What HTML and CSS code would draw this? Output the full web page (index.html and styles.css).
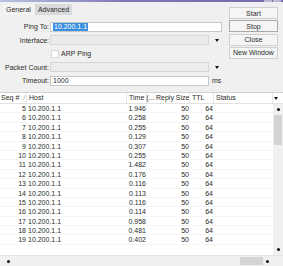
FILE: index.html
```html
<!DOCTYPE html>
<html lang="en">
<head>
  <meta charset="UTF-8">
  <title>Ping</title>
  <link rel="stylesheet" href="styles.css">
</head>
<body>
  <div class="titlebar"><span class="winbtn"></span><span class="winbtn"></span></div>

  <!-- settings area -->
  <div class="top">
    <div class="main">
      <div class="tabs">
        <span class="tab active">General</span>
        <span class="tab">Advanced</span>
      </div>
      <div class="form">
        <div class="row">
          <label>Ping To:</label>
          <div class="field white wide"><span class="sel">10.200.1.1</span></div>
        </div>
        <div class="row">
          <label>Interface:</label>
          <div class="field gray"></div>
          <span class="arrow"></span>
        </div>
        <div class="row">
          <label></label>
          <span class="check"></span><span class="checktext">ARP Ping</span>
        </div>
        <div class="row">
          <label>Packet Count:</label>
          <div class="field gray"></div>
          <span class="arrow"></span>
        </div>
        <div class="row">
          <label>Timeout:</label>
          <div class="field white">1000</div>
          <span class="unit">ms</span>
        </div>
      </div>
    </div>
    <div class="buttons">
      <button>Start</button>
      <button class="focus">Stop</button>
      <button>Close</button>
      <button>New Window</button>
    </div>
  </div>

  <!-- results table -->
  <div class="table">
    <div class="thead">
      <div class="th seq">Seq # <span class="sort">/</span></div>
      <div class="th">Host</div>
      <div class="th time">Time (...</div>
      <div class="th pad">Reply Size</div>
      <div class="th">TTL</div>
      <div class="th">Status</div>
      <div class="th menu"><span class="arrow"></span></div>
    </div>
    <div class="body">
      <div class="rows" id="rows"></div>
      <div class="vscroll">
        <span class="dot"></span>
        <span class="vthumb"></span>
        <span class="dot bottom"></span>
      </div>
    </div>
    <div class="hscroll">
      <div class="htrack">
        <span class="dot"></span>
        <span class="hthumb"></span>
        <span class="dot"></span>
      </div>
      <div class="corner"></div>
    </div>
  </div>

  <script>
    var times = ["1.946", "0.258", "0.255", "0.129", "0.307", "0.255", "1.482", "0.176",
                 "0.116", "0.113", "0.116", "0.114", "0.958", "0.481", "0.402"];
    var rows = document.getElementById("rows");
    times.forEach(function (t, i) {
      var row = document.createElement("div");
      row.className = "tr";
      row.innerHTML = '<div class="td num">' + (i + 5) + '</div>' +
        '<div class="td">10.200.1.1</div>' +
        '<div class="td num">' + t + '</div>' +
        '<div class="td num">50</div>' +
        '<div class="td num">64</div>' +
        '<div class="td"></div>';
      rows.appendChild(row);
    });
  </script>
</body>
</html>
```

FILE: styles.css
```css
html {
  box-sizing: border-box;
}
*, *:before, *:after {
  box-sizing: inherit;
}
body {
  margin: 0;
  width: 283px;
  height: 266px;
  overflow: hidden;
  background-color: #f0f0f0;
  font-family: "Liberation Sans", Arial, sans-serif;
  font-size: 7px;
  color: #2b2b2b;
}
.titlebar {
  height: 2px;
  background: linear-gradient(to right, #b9c2df, #7d77b6 45%, #6f6bab);
  display: flex;
  justify-content: flex-end;
  gap: 1px;
  padding-right: 2px;
}
.winbtn {
  width: 8px;
  height: 2px;
  background-color: #b9b8d6;
}

/* top part */
.top {
  display: flex;
  height: 90px;
}
.main {
  flex: 1;
}
.tabs {
  display: flex;
  padding: 2px 0 0 3px;
  height: 16px;
}
.tab {
  height: 11px;
  line-height: 11px;
  padding: 0 3px;
}
.tab.active {
  background-color: #f4f4f4;
}
.tab:not(.active) {
  background-color: #dadada;
  margin-left: 1px;
}
.form {
  padding-top: 2px;
}
.row {
  display: flex;
  align-items: center;
  height: 13.5px;
}
.row label {
  width: 50px;
  text-align: right;
  padding-right: 1px;
}
.field {
  width: 159px;
  height: 10px;
  line-height: 8px;
  border: 1px solid #c8c8c8;
  padding-left: 2px;
}
.field.wide {
  width: 172px;
}
.field.white {
  background-color: #fff;
}
.field.gray {
  background-color: #ececec;
  border-color: #d6d6d6;
}
.sel {
  background-color: #3b8fe0;
  color: #fff;
  display: inline-block;
  padding: 0 1px;
}
.arrow {
  width: 0;
  height: 0;
  border-left: 2.5px solid transparent;
  border-right: 2.5px solid transparent;
  border-top: 3px solid #111;
  margin-left: 6px;
}
.check {
  width: 8px;
  height: 8px;
  background-color: #fff;
  border: 1px solid #d8d8d8;
  margin-left: 1px;
}
.checktext {
  margin-left: 2px;
}
.unit {
  margin-left: 3px;
}
.buttons {
  width: 54px;
  padding: 5px 5px 0 0;
  display: flex;
  flex-direction: column;
  gap: 1.3px;
}
button {
  height: 12px;
  padding: 0;
  font-family: inherit;
  font-size: 7px;
  color: #2b2b2b;
  background-color: #f5f5f5;
  border: 1px solid #cfcfcf;
}
button.focus {
  border-color: #a9a9a9;
}

/* table */
.table {
  height: 176px;
  background-color: #fff;
  border-top: 1px solid #d2d2d2;
  display: flex;
  flex-direction: column;
}
.thead,
.tr {
  display: grid;
  grid-template-columns: 27px 100px 20px 43px 24px 59px;
}
.thead {
  grid-template-columns: 27px 100px 20px 43px 24px 59px 10px;
  height: 11px;
  line-height: 10px;
  border-bottom: 1px solid #e2e2e2;
}
.th {
  padding-left: 2px;
  border-right: 1px solid #e6e6e6;
  white-space: nowrap;
  overflow: hidden;
}
.th.seq {
  padding-left: 1px;
}
.th.time {
  overflow: visible;
  position: relative;
  z-index: 1;
}
.th.pad {
  padding-left: 9px;
}
.sort {
  color: #999;
  margin-left: 2px;
}
.th.menu {
  border-right: none;
  display: flex;
  align-items: center;
  padding-left: 0;
}
.th.menu .arrow {
  margin-left: 1px;
}
.body {
  flex: 1;
  display: flex;
}
.rows {
  flex: 1;
}
.tr {
  height: 9.4px;
  line-height: 9.4px;
  border-bottom: 1px solid #f5f5f5;
}
.td {
  padding-left: 1px;
  white-space: nowrap;
}
.td.num {
  text-align: right;
  padding-right: 1px;
}
.vscroll {
  width: 10px;
  background-color: #f0f0f0;
  display: flex;
  flex-direction: column;
  align-items: center;
}
.dot {
  width: 3px;
  height: 3px;
  border-radius: 50%;
  background-color: #111;
  margin: 4px 0;
  flex: none;
}
.dot.bottom {
  margin-top: auto;
}
.vthumb {
  width: 8px;
  height: 30px;
  background-color: #d4d4d4;
}
.hscroll {
  height: 13px;
  display: flex;
  border-top: 1px solid #e4e4e4;
}
.htrack {
  flex: 1;
  display: flex;
  align-items: center;
  background-color: #f0f0f0;
  padding: 0 4px;
  height: 10px;
}
.hthumb {
  margin-left: auto;
  width: 23px;
  height: 8px;
  background-color: #d4d4d4;
}
.htrack .dot {
  margin: 0 0 0 3px;
}
.corner {
  width: 10px;
  height: 10px;
  background-color: #f0f0f0;
}
```
